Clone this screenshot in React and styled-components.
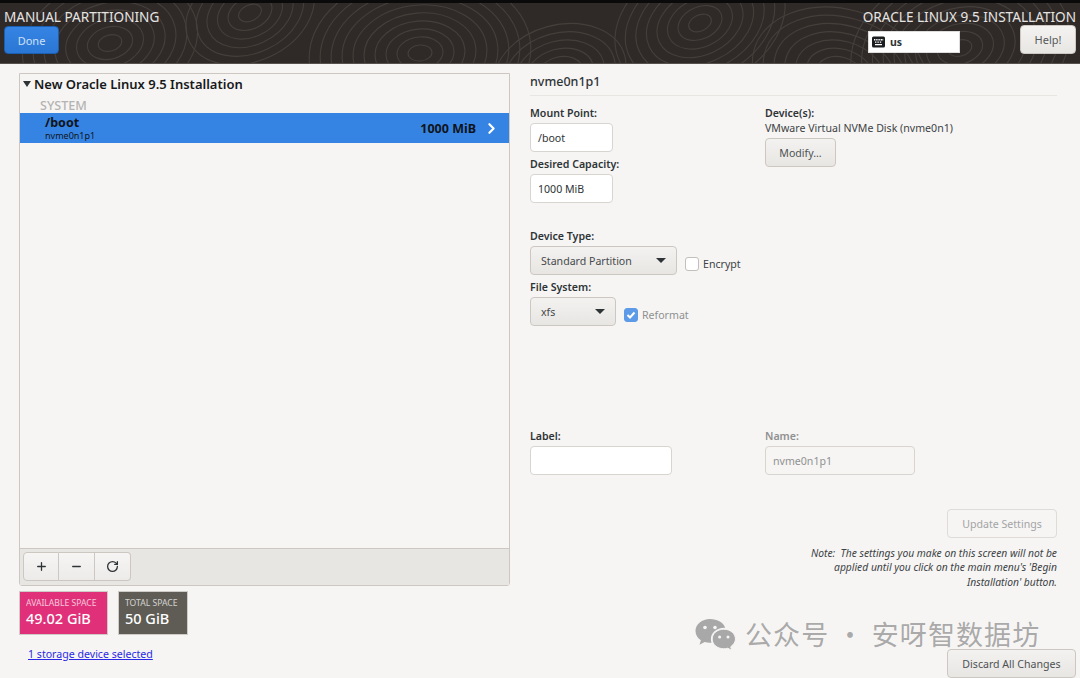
import React from "react";
import styled, { createGlobalStyle } from "styled-components";
import { ChevronRight, Plus, Minus, RotateCw } from "lucide-react";

const Global = createGlobalStyle`
  html, body { margin: 0; padding: 0; background: #f6f5f4; }
  body { font-family: "Noto Sans", "Open Sans", "Noto Sans CJK SC", sans-serif; color: #2e3436; }
  * { box-sizing: border-box; }
`;

const Page = styled.div`
  width: 1080px;
  height: 678px;
  overflow: hidden;
  position: relative;
  display: flex;
  flex-direction: column;
  background: #f6f5f4;
`;

const Header = styled.header`
  position: relative;
  flex: none;
  height: 64px;
  border-top: 3px solid #0b0a0a;
  background: #2f2a28;
  border-bottom: 1px solid #57514d;
  display: flex;
  justify-content: space-between;
  padding: 5px 4px 0 4px;
  overflow: hidden;
`;

const Texture = styled.svg`
  position: absolute;
  left: 0;
  top: 0;
  width: 1080px;
  height: 61px;
`;

const HeaderSide = styled.div`
  position: relative;
  display: flex;
  flex-direction: column;
  align-items: ${(p) => (p.$right ? "flex-end" : "flex-start")};
`;

const HeaderTitle = styled.div`
  font-size: 13.6px;
  line-height: 17px;
  color: #e6e4e2;
  white-space: nowrap;
`;

const DoneButton = styled.button`
  margin-top: 1px;
  width: 55px;
  height: 28px;
  border: 1px solid #1b5fb0;
  border-radius: 4px;
  background: linear-gradient(#3584e4, #2a76d4);
  color: #cfe0f5;
  font: 11px "Noto Sans", sans-serif;
`;

const HeaderControls = styled.div`
  display: flex;
  align-items: flex-start;
  gap: 60px;
`;

const KeyboardBox = styled.div`
  margin-top: 6px;
  width: 92px;
  height: 22px;
  background: #fff;
  border: 1px solid #ddd;
  display: flex;
  align-items: center;
  gap: 5px;
  padding-left: 3px;
  font-size: 10.5px;
  font-weight: 700;
  color: #2e3436;
`;

const HelpButton = styled.button`
  width: 56px;
  height: 29px;
  margin-right: 0;
  border: 1px solid #cdc7c2;
  border-radius: 4px;
  background: linear-gradient(#f4f3f1, #e8e6e3);
  color: #55595a;
  font: 11px "Noto Sans", sans-serif;
`;

const Body = styled.main`
  position: relative;
  flex: 1;
  display: flex;
  padding: 9px 4px 0 19px;
`;

const LeftColumn = styled.section`
  width: 491px;
  flex: none;
  display: flex;
  flex-direction: column;
`;

const TreePanel = styled.div`
  height: 513px;
  border: 1px solid #cdc7c2;
  border-radius: 0 0 3px 3px;
  background: #f6f5f4;
  display: flex;
  flex-direction: column;
`;

const TreeBody = styled.div`
  flex: 1;
`;

const InstallRow = styled.div`
  display: flex;
  align-items: center;
  gap: 3px;
  height: 20px;
  padding-left: 3px;
  font-size: 13px;
  font-weight: 600;
  color: #17191a;
`;

const Triangle = styled.span`
  width: 0;
  height: 0;
  border-left: 4.5px solid transparent;
  border-right: 4.5px solid transparent;
  border-top: 6px solid #2e3436;
`;

const SystemHeading = styled.div`
  margin-top: 2px;
  padding-left: 20px;
  height: 17px;
  font-size: 12.6px;
  line-height: 19px;
  font-weight: 500;
  color: #b4b3b1;
`;

const SelectedRow = styled.div`
  height: 30px;
  background: #3584e4;
  display: flex;
  align-items: center;
  justify-content: space-between;
  padding: 0 9px 0 25px;
  color: #10141a;
`;

const MountName = styled.div`
  font-size: 12.5px;
  line-height: 15px;
  font-weight: 700;
`;

const MountDevice = styled.div`
  font-size: 9px;
  line-height: 12px;
`;

const RowSize = styled.div`
  display: flex;
  align-items: center;
  gap: 7px;
  font-size: 12.5px;
  font-weight: 700;
`;

const Toolbar = styled.div`
  height: 37px;
  flex: none;
  border-top: 1px solid #cdc7c2;
  background: #e8e6e3;
  padding: 3px;
  display: flex;
`;

const ToolButton = styled.button`
  width: 36px;
  height: 29px;
  padding: 0;
  display: flex;
  align-items: center;
  justify-content: center;
  border: 1px solid #cdc7c2;
  border-left-width: ${(p) => (p.$first ? 1 : 0)}px;
  border-radius: ${(p) => (p.$first ? "4px 0 0 4px" : p.$last ? "0 4px 4px 0" : "0")};
  background: linear-gradient(#f6f5f4, #edebe9);
  color: #2e3436;
`;

const Badges = styled.div`
  display: flex;
  gap: 10px;
  margin-top: 5px;
`;

const Badge = styled.div`
  width: ${(p) => p.$width}px;
  height: 44px;
  padding: 6px 5px 0 6px;
  background: ${(p) => p.$color};
  border: 1px solid #cfcbc7;
  color: #fff;
`;

const BadgeLabel = styled.div`
  font-size: 8.6px;
  line-height: 10px;
  opacity: 0.72;
  white-space: nowrap;
`;

const BadgeValue = styled.div`
  font-size: 14.5px;
  line-height: 21px;
  font-weight: 500;
  white-space: nowrap;
`;

const StorageLink = styled.a`
  margin: 12px 0 0 9px;
  font-size: 10.6px;
  line-height: 14px;
  color: #2a2ae6;
  text-decoration: underline;
`;

const RightColumn = styled.section`
  flex: 1;
  margin-left: 20px;
  position: relative;
`;

const DetailTitle = styled.h2`
  margin: 0;
  width: 527px;
  height: 15px;
  padding-top: 0;
  font-size: 12.5px;
  line-height: 4px;
  font-weight: 500;
  color: #2e3436;
  height: 15px;
  display: flex;
  align-items: center;
  height: 15px;
`;

const DetailHead = styled.div`
  width: 527px;
  height: 23px;
  padding-top: 1px;
  border-bottom: 1px solid #e8e6e3;
`;

const FormTop = styled.div`
  display: grid;
  grid-template-columns: 235px 1fr;
  padding-top: 10px;
`;

const Stack = styled.div`
  display: flex;
  flex-direction: column;
`;

const FieldLabel = styled.div`
  font-size: 10.6px;
  line-height: 14px;
  font-weight: 600;
  color: ${(p) => (p.$muted ? "#8f9090" : "#2e3436")};
  margin-top: ${(p) => p.$top || 0}px;
  margin-bottom: 3px;
`;

const TextField = styled.div`
  width: ${(p) => p.$width}px;
  height: 29px;
  padding-left: 7px;
  display: flex;
  align-items: center;
  font-size: 10.6px;
  color: ${(p) => (p.$muted ? "#909292" : "#2e3436")};
  background: ${(p) => (p.$muted ? "#f6f5f4" : "#fff")};
  border: 1px solid #d8d4d0;
  border-radius: 4px;
`;

const DeviceName = styled.div`
  margin-top: -2px;
  font-size: 10.6px;
  line-height: 15px;
  color: #3d4244;
`;

const GrayButton = styled.button`
  display: block;
  width: ${(p) => p.$width}px;
  height: 29px;
  margin: ${(p) => p.$margin || 0};
  padding: 0;
  border: 1px solid ${(p) => (p.$disabled ? "#dedbd8" : "#cdc7c2")};
  border-radius: 4px;
  background: ${(p) => (p.$disabled ? "#f6f5f4" : "linear-gradient(#f3f2f0, #e8e6e3)")};
  color: ${(p) => (p.$disabled ? "#a3a4a4" : "#4d5254")};
  font: 10.6px "Noto Sans", sans-serif;
  white-space: nowrap;
`;

const SelectRow = styled.div`
  display: flex;
  align-items: ${(p) => p.$align || "center"};
  margin-top: ${(p) => p.$top || 0}px;
`;

const SelectBox = styled.div`
  width: ${(p) => p.$width}px;
  height: 29px;
  padding: 0 10px;
  display: flex;
  align-items: center;
  justify-content: space-between;
  font-size: 10.6px;
  color: #45494b;
  border: 1px solid #cdc7c2;
  border-radius: 4px;
  background: linear-gradient(#f3f2f0, #e8e6e3);
`;

const SelectArrow = styled.span`
  width: 0;
  height: 0;
  border-left: 5px solid transparent;
  border-right: 5px solid transparent;
  border-top: 5px solid #2e3436;
`;

const CheckLine = styled.div`
  display: flex;
  align-items: center;
  gap: 4px;
  margin-left: ${(p) => p.$left}px;
  padding-top: 6px;
  font-size: 10.6px;
  color: ${(p) => (p.$muted ? "#8f9090" : "#3d4244")};
`;

const CheckBox = styled.span`
  width: 14px;
  height: 14px;
  border-radius: 3px;
  display: flex;
  align-items: center;
  justify-content: center;
  background: ${(p) => (p.$checked ? "#5d9be8" : "#fff")};
  border: 1px solid ${(p) => (p.$checked ? "#5d9be8" : "#c3bfba")};
`;

const FormNames = styled.div`
  display: grid;
  grid-template-columns: 235px 1fr;
  margin-top: 103px;
`;

const FormActions = styled.div`
  width: 527px;
  margin-top: 34px;
  display: flex;
  flex-direction: column;
  align-items: flex-end;
`;

const Note = styled.p`
  margin: 8px 0 0;
  width: 270px;
  font-size: 10.3px;
  line-height: 14.4px;
  font-style: italic;
  text-align: right;
  color: #3d4244;
`;

const DiscardSlot = styled.div`
  position: absolute;
  right: 0;
  top: 576px;
`;

const Watermark = styled.div`
  position: absolute;
  left: 695px;
  top: 617px;
  display: flex;
  align-items: center;
  gap: 9px;
  font-family: "Noto Sans CJK SC", sans-serif;
  font-size: 27px;
  line-height: 34px;
  letter-spacing: 1.1px;
  white-space: nowrap;
  color: rgba(120, 120, 120, 0.62);
  pointer-events: none;
  z-index: 2;
`;

const KeyboardIcon = () => (
  <svg width="13" height="12" viewBox="0 0 13 12">
    <rect x="0" y="0.5" width="13" height="11" rx="1.5" fill="#1b1d1e" />
    <path d="M2 3h1.4v1.4H2zM4.2 3h1.4v1.4H4.2zM6.4 3h1.4v1.4H6.4zM8.6 3H10v1.4H8.6zM10.4 3h.8v1.4h-.8zM3 5.4h1.4v1.4H3zM5.4 5.4h1.4v1.4H5.4zM7.8 5.4h1.4v1.4H7.8zM3 8h7v1.2H3z" fill="#fff" />
  </svg>
);

const WeChatIcon = () => (
  <svg width="41" height="33" viewBox="0 0 41 33" fill="#a8a8a8">
    <path d="M15 1C7 1 .5 6.4.5 13c0 3.8 2.100 7 5.400 9.300L4.500 26.700 9.600 24c1.700.5 3.400.8 5.400.8.500 0 1 0 1.500-.1-.4-1.200-.6-2.400-.6-3.700 0-6.200 5.900-11.200 13.100-11.200.4 0 .8 0 1.200.1C28.800 4.800 22.500 1 15 1z" />
    <path d="M40.500 21c0-5.400-5.300-9.800-11.700-9.800S17.200 15.600 17.200 21s5.200 9.800 11.600 9.800c1.400 0 2.700-.2 4-.6l4 2.300-1.100-3.700c2.900-2.100 4.800-5 4.800-7.800z" stroke="#f6f5f4" strokeWidth="1" />
    <circle cx="10" cy="9.500" r="1.800" fill="#f6f5f4" />
    <circle cx="20" cy="9.500" r="1.800" fill="#f6f5f4" />
    <circle cx="24.600" cy="19" r="1.500" fill="#f6f5f4" />
    <circle cx="33" cy="19" r="1.500" fill="#f6f5f4" />
  </svg>
);

// topographic lines behind the header
const contours = [
  [110, 40, 4], [420, 50, 5], [700, 20, 4], [960, 45, 5], [250, 10, 3], [840, 70, 4], [560, 70, 3],
];

const HeaderTexture = () => (
  <Texture viewBox="0 0 1080 61" fill="none" stroke="#453f3b" strokeWidth="1.100">
    {contours.map(([cx, cy, n]) =>
      Array.from({ length: n * 2 }, (_, i) => (
        <ellipse
          key={`${cx}-${i}`}
          cx={cx}
          cy={cy}
          rx={12 + i * 11}
          ry={8 + i * 8}
          transform={`rotate(${(cx % 50) - 25} ${cx} ${cy})`}
        />
      ))
    )}
  </Texture>
);

export default function App() {
  return (
    <Page>
      <Global />
      <Header>
        <HeaderTexture />
        <HeaderSide>
          <HeaderTitle>MANUAL PARTITIONING</HeaderTitle>
          <DoneButton>Done</DoneButton>
        </HeaderSide>
        <HeaderSide $right>
          <HeaderTitle>ORACLE LINUX 9.5 INSTALLATION</HeaderTitle>
          <HeaderControls>
            <KeyboardBox>
              <KeyboardIcon />
              us
            </KeyboardBox>
            <HelpButton>Help!</HelpButton>
          </HeaderControls>
        </HeaderSide>
      </Header>

      <Body>
        <LeftColumn>
          <TreePanel>
            <TreeBody>
              <InstallRow>
                <Triangle />
                New Oracle Linux 9.5 Installation
              </InstallRow>
              <SystemHeading>SYSTEM</SystemHeading>
              <SelectedRow>
                <div>
                  <MountName>/boot</MountName>
                  <MountDevice>nvme0n1p1</MountDevice>
                </div>
                <RowSize>
                  1000 MiB
                  <ChevronRight size={17} strokeWidth={3} color="#fff" />
                </RowSize>
              </SelectedRow>
            </TreeBody>
            <Toolbar>
              <ToolButton $first><Plus size={13} strokeWidth={2.4} /></ToolButton>
              <ToolButton><Minus size={13} strokeWidth={2.4} /></ToolButton>
              <ToolButton $last><RotateCw size={13} strokeWidth={2.4} /></ToolButton>
            </Toolbar>
          </TreePanel>
          <Badges>
            <Badge $width={89} $color="#e0307a">
              <BadgeLabel>AVAILABLE SPACE</BadgeLabel>
              <BadgeValue>49.02 GiB</BadgeValue>
            </Badge>
            <Badge $width={70} $color="#5e5c54">
              <BadgeLabel>TOTAL SPACE</BadgeLabel>
              <BadgeValue>50 GiB</BadgeValue>
            </Badge>
          </Badges>
          <StorageLink>1 storage device selected</StorageLink>
        </LeftColumn>

        <RightColumn>
          <DetailHead>
            <DetailTitle>nvme0n1p1</DetailTitle>
          </DetailHead>
          <FormTop>
            <Stack>
              <FieldLabel>Mount Point:</FieldLabel>
              <TextField $width={83}>/boot</TextField>
              <FieldLabel $top={5}>Desired Capacity:</FieldLabel>
              <TextField $width={83}>1000 MiB</TextField>
            </Stack>
            <Stack>
              <FieldLabel>Device(s):</FieldLabel>
              <DeviceName>VMware Virtual NVMe Disk (nvme0n1)</DeviceName>
              <GrayButton $width={71} $margin="2px 0 0">Modify...</GrayButton>
            </Stack>
          </FormTop>
          <Stack>
            <FieldLabel $top={26}>Device Type:</FieldLabel>
            <SelectRow>
              <SelectBox $width={147}>
                Standard Partition
                <SelectArrow />
              </SelectBox>
              <CheckLine $left={8}>
                <CheckBox />
                Encrypt
              </CheckLine>
            </SelectRow>
            <FieldLabel $top={5}>File System:</FieldLabel>
            <SelectRow>
              <SelectBox $width={86}>
                xfs
                <SelectArrow />
              </SelectBox>
              <CheckLine $left={8} $muted>
                <CheckBox $checked>
                  <svg width="10" height="10" viewBox="0 0 10 10" fill="none" stroke="#fff" strokeWidth="2">
                    <path d="M1.500 5l2.500 2.500 4.500-5" />
                  </svg>
                </CheckBox>
                Reformat
              </CheckLine>
            </SelectRow>
          </Stack>
          <FormNames>
            <Stack>
              <FieldLabel>Label:</FieldLabel>
              <TextField $width={142} />
            </Stack>
            <Stack>
              <FieldLabel $muted>Name:</FieldLabel>
              <TextField $width={150} $muted>nvme0n1p1</TextField>
            </Stack>
          </FormNames>
          <FormActions>
            <GrayButton $width={110} $disabled>Update Settings</GrayButton>
            <Note>Note:&nbsp; The settings you make on this screen will not be applied until you click on the main menu's 'Begin Installation' button.</Note>
          </FormActions>
          <DiscardSlot>
            <GrayButton $width={129}>Discard All Changes</GrayButton>
          </DiscardSlot>
        </RightColumn>
      </Body>
      <Watermark>
        <WeChatIcon />
        公众号 · 安呀智数据坊
      </Watermark>
    </Page>
  );
}
